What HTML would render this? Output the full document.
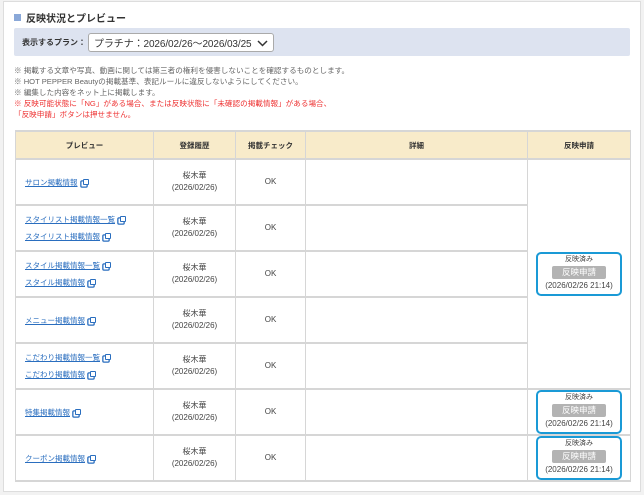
<!DOCTYPE html>
<html><head><meta charset="utf-8"><style>
*{box-sizing:border-box;margin:0;padding:0}
body{width:644px;height:495px;background:#f2f2f2;font-family:"Liberation Sans","Noto Sans CJK JP",sans-serif;color:#333;position:relative;overflow:hidden}
.panel{position:absolute;left:3px;top:1px;width:638px;height:491px;background:#fff;border:1px solid #ddd}
.title{position:absolute;left:14px;top:10px;font-size:10px;font-weight:bold;display:flex;align-items:center}
.title i{display:inline-block;width:7px;height:7px;background:#8aa8d8;margin-right:5px}
.plan{position:absolute;left:14px;top:28px;width:616px;height:28px;background:#dde3f0;border-radius:2px}
.plan .lb{position:absolute;left:8px;top:9px;font-size:8px;font-weight:bold}
.sel{position:absolute;left:74px;top:5px;width:186px;height:19px;background:#fff;border:1px solid #aaa;border-radius:3px;font-size:10px;padding:0 5px;color:#333;white-space:nowrap;display:flex;align-items:center}
.sel span{letter-spacing:-0.1px}
.sel svg{position:absolute;right:5px;top:6px}
.notes{position:absolute;left:14px;top:65px;font-size:7.6px;line-height:11px;color:#666;white-space:nowrap}
.red{color:#e33}
table{position:absolute;left:15px;top:130px;border-collapse:collapse;font-size:8px;table-layout:fixed}
td,th{border:1px solid #d6d6d6;border-width:2px 1px}
th{background:#f8ebca;height:28px;font-weight:bold;font-size:7.5px}
td{height:46px;text-align:center;vertical-align:middle;line-height:12px;color:#444}
td.l{text-align:left;padding-left:9px}
a{color:#2a6ebf;text-decoration:underline;font-size:7.5px;line-height:17px}
.cp{display:inline-block;width:6px;height:6px;border:1.3px solid #2a6ebf;border-radius:1px;margin-left:5px;position:relative;top:0px;box-shadow:-2px 2px 0 -0.5px #fff,-2px 2px 0 0.8px #2a6ebf}
.box{width:86px;height:44px;border:2px solid #1a9ad6;border-radius:5px;margin:0 auto;font-size:7px;line-height:10px;padding-top:1px;text-align:center;color:#444}
.btn{display:block;width:54px;height:13px;margin:1px auto 2px;background:#b3b3b3;color:#fff;font-size:8.5px;line-height:13px;border-radius:2px}
.box .d{font-size:8px}
</style></head><body>
<div class="panel"></div>
<div class="title"><i></i>反映状況とプレビュー</div>
<div class="plan"><span class="lb">表示するプラン：</span><div class="sel"><span>プラチナ：2026/02/26〜2026/03/25</span><svg width="11" height="7" viewBox="0 0 11 7"><path d="M1 1l4.5 4.5L10 1" fill="none" stroke="#333" stroke-width="1.5"/></svg></div></div>
<div class="notes">※ 掲載する文章や写真、動画に関しては第三者の権利を侵害しないことを確認するものとします。<br>※ HOT PEPPER Beautyの掲載基準、表記ルールに違反しないようにしてください。<br>※ 編集した内容をネット上に掲載します。<br><span class="red">※ 反映可能状態に「NG」がある場合、または反映状態に「未確認の掲載情報」がある場合、<br>「反映申請」ボタンは押せません。</span></div>
<table>
<colgroup><col style="width:138px"><col style="width:82px"><col style="width:70px"><col style="width:222px"><col style="width:103px"></colgroup>
<tr><th>プレビュー</th><th>登録履歴</th><th>掲載チェック</th><th>詳細</th><th>反映申請</th></tr>
<tr><td class="l"><a>サロン掲載情報</a><span class="cp"></span></td><td>桜木華<br>(2026/02/26)</td><td>OK</td><td></td><td rowspan="5"><div class="box">反映済み<span class="btn">反映申請</span><span class="d">(2026/02/26 21:14)</span></div></td></tr>
<tr><td class="l"><a>スタイリスト掲載情報一覧</a><span class="cp"></span><br><a>スタイリスト掲載情報</a><span class="cp"></span></td><td>桜木華<br>(2026/02/26)</td><td>OK</td><td></td></tr>
<tr><td class="l"><a>スタイル掲載情報一覧</a><span class="cp"></span><br><a>スタイル掲載情報</a><span class="cp"></span></td><td>桜木華<br>(2026/02/26)</td><td>OK</td><td></td></tr>
<tr><td class="l"><a>メニュー掲載情報</a><span class="cp"></span></td><td>桜木華<br>(2026/02/26)</td><td>OK</td><td></td></tr>
<tr><td class="l"><a>こだわり掲載情報一覧</a><span class="cp"></span><br><a>こだわり掲載情報</a><span class="cp"></span></td><td>桜木華<br>(2026/02/26)</td><td>OK</td><td></td></tr>
<tr><td class="l"><a>特集掲載情報</a><span class="cp"></span></td><td>桜木華<br>(2026/02/26)</td><td>OK</td><td></td><td><div class="box">反映済み<span class="btn">反映申請</span><span class="d">(2026/02/26 21:14)</span></div></td></tr>
<tr><td class="l"><a>クーポン掲載情報</a><span class="cp"></span></td><td>桜木華<br>(2026/02/26)</td><td>OK</td><td></td><td><div class="box">反映済み<span class="btn">反映申請</span><span class="d">(2026/02/26 21:14)</span></div></td></tr>
</table>
</body></html>
